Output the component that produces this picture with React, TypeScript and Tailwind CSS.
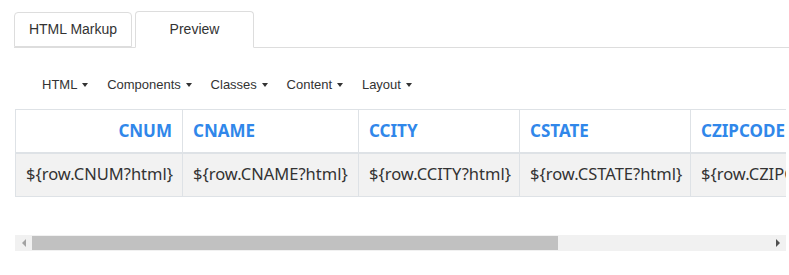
import React from 'react';

const menus = ['HTML', 'Components', 'Classes', 'Content', 'Layout'];
const columns = [
  { key: 'CNUM', width: 167, right: true },
  { key: 'CNAME', width: 176 },
  { key: 'CCITY', width: 161 },
  { key: 'CSTATE', width: 171 },
  { key: 'CZIPCODE', width: 176 },
];

const Caret = () => (
  <span className="ml-[5px] inline-block h-0 w-0 border-x-[3.5px] border-t-[4px] border-x-transparent border-t-[#333] align-middle" />
);

export default function App() {
  return (
    <div className="h-[275px] w-[789px] overflow-hidden bg-white">
      {/* tabs */}
      <div className="ml-[14px] mt-[11px] flex border-b border-[#dddddd] font-['Liberation_Sans',Arial,sans-serif] text-[14px] text-[#333]">
        <div className="-mb-px mr-[3px] mt-px flex h-[35px] w-[118px] items-center justify-center rounded-t-[4px] border border-[#dddddd]">
          HTML Markup
        </div>
        <div className="-mb-px flex h-[37px] w-[119px] items-center justify-center rounded-t-[4px] border border-b-white border-[#dddddd] bg-white">
          Preview
        </div>
      </div>

      {/* menu bar */}
      <div className="mt-[25px] flex h-[24px] items-center pl-[33px] font-['Liberation_Sans',Arial,sans-serif] text-[13px] text-[#333]">
        {menus.map((m) => (
          <div key={m} className="flex items-center pl-[9px] pr-[9.75px]">
            {m}
            <Caret />
          </div>
        ))}
      </div>

      {/* table */}
      <div className="ml-[15px] mt-[12px] w-[771px] overflow-hidden">
        <table className="table-fixed border-collapse font-['Noto_Sans','Open_Sans',sans-serif] text-[16.5px]" style={{ width: columns.reduce((a, c) => a + c.width, 0) }}>
          <colgroup>
            {columns.map((c) => (
              <col key={c.key} style={{ width: c.width }} />
            ))}
          </colgroup>
          <thead>
            <tr className="h-[43px]">
              {columns.map((c) => (
                <th
                  key={c.key}
                  className={`whitespace-nowrap border border-b-2 border-[#dee2e6] px-[10px] text-[17px] font-bold text-[#3087ea] ${c.right ? 'text-right' : 'text-left'}`}
                >
                  {c.key}
                </th>
              ))}
            </tr>
          </thead>
          <tbody>
            <tr className="h-[44px] bg-[#f2f2f2]">
              {columns.map((c) => (
                <td key={c.key} className="overflow-hidden whitespace-nowrap border border-[#dee2e6] px-[10px] text-[#333]">
                  {'${row.' + c.key + '?html}'}
                </td>
              ))}
            </tr>
          </tbody>
        </table>
      </div>

      {/* horizontal scrollbar */}
      <div className="ml-[15px] mt-[38px] flex h-[16px] w-[771px] items-center bg-[#f1f1f1]">
        <div className="flex w-[17px] justify-center">
          <span className="h-0 w-0 border-y-[4px] border-r-[4px] border-y-transparent border-r-[#a3a3a3]" />
        </div>
        <div className="h-[14px] w-[526px] bg-[#c1c1c1]" />
        <div className="flex-1" />
        <div className="flex w-[17px] justify-center">
          <span className="h-0 w-0 border-y-[4px] border-l-[4px] border-y-transparent border-l-[#505050]" />
        </div>
      </div>
    </div>
  );
}
